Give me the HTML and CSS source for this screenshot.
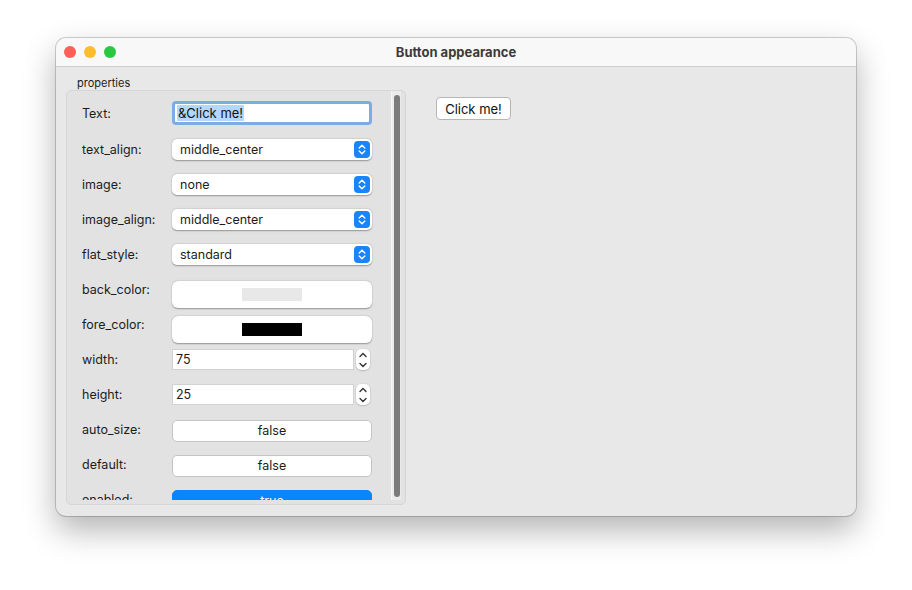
FILE: index.html
```html
<!DOCTYPE html>
<html lang="en">
<head>
    <meta charset="UTF-8">
    <title>Button appearance</title>
    <link rel="stylesheet" href="styles.css">
</head>
<body>
    <div class="window">
        <!-- title bar -->
        <div class="titlebar">
            <div class="lights">
                <span class="light red"></span>
                <span class="light yellow"></span>
                <span class="light green"></span>
            </div>
            <div class="title">Button appearance</div>
            <div></div>
        </div>

        <div class="content">
            <div class="props">
                <div class="group-label">properties</div>
                <div class="group">
                    <div class="scroller">
                        <div class="rows">
                            <div class="row first">
                                <label>Text:</label>
                                <div class="field"><span class="sel">&amp;Click me!</span></div>
                            </div>
                            <div class="row">
                                <label>text_align:</label>
                                <div class="select"><span>middle_center</span><span class="arrows"><svg width="8" height="11" viewBox="0 0 8 11"><path d="M1.2 4 L4 1.3 L6.8 4 M1.2 7 L4 9.7 L6.8 7" fill="none" stroke="#fff" stroke-width="1.4" stroke-linecap="round" stroke-linejoin="round"/></svg></span></div>
                            </div>
                            <div class="row">
                                <label>image:</label>
                                <div class="select"><span>none</span><span class="arrows"><svg width="8" height="11" viewBox="0 0 8 11"><path d="M1.2 4 L4 1.3 L6.8 4 M1.2 7 L4 9.7 L6.8 7" fill="none" stroke="#fff" stroke-width="1.4" stroke-linecap="round" stroke-linejoin="round"/></svg></span></div>
                            </div>
                            <div class="row">
                                <label>image_align:</label>
                                <div class="select"><span>middle_center</span><span class="arrows"><svg width="8" height="11" viewBox="0 0 8 11"><path d="M1.2 4 L4 1.3 L6.8 4 M1.2 7 L4 9.7 L6.8 7" fill="none" stroke="#fff" stroke-width="1.4" stroke-linecap="round" stroke-linejoin="round"/></svg></span></div>
                            </div>
                            <div class="row">
                                <label>flat_style:</label>
                                <div class="select"><span>standard</span><span class="arrows"><svg width="8" height="11" viewBox="0 0 8 11"><path d="M1.2 4 L4 1.3 L6.8 4 M1.2 7 L4 9.7 L6.8 7" fill="none" stroke="#fff" stroke-width="1.4" stroke-linecap="round" stroke-linejoin="round"/></svg></span></div>
                            </div>
                            <div class="row">
                                <label>back_color:</label>
                                <div class="color-btn"><span class="swatch light-swatch"></span></div>
                            </div>
                            <div class="row">
                                <label>fore_color:</label>
                                <div class="color-btn"><span class="swatch dark-swatch"></span></div>
                            </div>
                            <div class="row">
                                <label>width:</label>
                                <div class="spin">
                                    <div class="spin-field">75</div>
                                    <div class="stepper"><svg width="12" height="20" viewBox="0 0 12 20"><path d="M3 6.5 L6 3.5 L9 6.5 M3 13.5 L6 16.5 L9 13.5" fill="none" stroke="#333" stroke-width="1.4" stroke-linecap="round" stroke-linejoin="round"/></svg></div>
                                </div>
                            </div>
                            <div class="row">
                                <label>height:</label>
                                <div class="spin">
                                    <div class="spin-field">25</div>
                                    <div class="stepper"><svg width="12" height="20" viewBox="0 0 12 20"><path d="M3 6.5 L6 3.5 L9 6.5 M3 13.5 L6 16.5 L9 13.5" fill="none" stroke="#333" stroke-width="1.4" stroke-linecap="round" stroke-linejoin="round"/></svg></div>
                                </div>
                            </div>
                            <div class="row">
                                <label>auto_size:</label>
                                <div class="toggle">false</div>
                            </div>
                            <div class="row">
                                <label>default:</label>
                                <div class="toggle">false</div>
                            </div>
                            <div class="row">
                                <label>enabled:</label>
                                <div class="toggle on">true</div>
                            </div>
                        </div>
                        <div class="scrollbar"><div class="thumb"></div></div>
                    </div>
                </div>
            </div>

            <div class="preview">
                <button class="demo">Click me!</button>
            </div>
        </div>
    </div>
</body>
</html>
```

FILE: styles.css
```css
html, body {
    margin: 0;
    background: #ffffff;
}
body {
    height: 590px;
    padding: 38px 0 0 56px;
    box-sizing: border-box;
    font-family: Inter, "Noto Sans", sans-serif;
    font-size: 12.5px;
    color: #1c1c1c;
}
.window {
    width: 800px;
    height: 478px;
    background: #e8e8e8;
    border-radius: 10px;
    box-shadow: 0 0 0 1px rgba(0, 0, 0, 0.18), 0 14px 32px rgba(0, 0, 0, 0.3);
    overflow: hidden;
}
.titlebar {
    height: 28px;
    background: #f8f8f8;
    border-bottom: 1px solid #cfcfcf;
    display: grid;
    grid-template-columns: 1fr auto 1fr;
    align-items: center;
}
.lights {
    display: flex;
    gap: 8px;
    padding-left: 8px;
}
.light {
    width: 12px;
    height: 12px;
    border-radius: 50%;
}
.red { background: #ff5f57; }
.yellow { background: #febc2e; }
.green { background: #28c840; }
.title {
    font-weight: 700;
    font-size: 13px;
    color: #3b3b3b;
}
.content {
    display: flex;
    gap: 30px;
}
.props {
    margin-left: 10px;
    width: 340px;
}
.group-label {
    font-size: 11px;
    padding: 9px 0 0 11px;
    height: 14px;
}
.group {
    height: 413px;
    background: #e2e2e2;
    border: 1px solid #d6d6d6;
    border-radius: 5px;
    overflow: hidden;
}
.scroller {
    height: 409px;
    display: flex;
    overflow: hidden;
    padding-right: 3px;
}
.rows {
    flex: 1;
    padding: 3px 0 0 15px;
}
.row {
    height: 35px;
    display: flex;
    align-items: center;
}
.row.first {
    height: 38px;
}
.row label {
    width: 90px;
    flex-shrink: 0;
}
.field {
    width: 192px;
    height: 18px;
    border: 3px solid #7faae8;
    border-radius: 4px;
    background: #ffffff;
    padding-left: 2px;
    display: flex;
    align-items: center;
}
.sel {
    background: #b3d7ff;
    color: #111;
    font-size: 13px;
    line-height: 16px;
    padding: 0 1px;
}
.select {
    width: 200px;
    height: 21px;
    background: #ffffff;
    border-radius: 5px;
    box-shadow: 0 0.5px 1.5px rgba(0, 0, 0, 0.35);
    display: flex;
    align-items: center;
    justify-content: space-between;
    padding-left: 8px;
    box-sizing: border-box;
}
.arrows {
    width: 16px;
    height: 17px;
    margin-right: 2px;
    background: #1a84fb;
    border-radius: 4px;
    display: flex;
    align-items: center;
    justify-content: center;
}
.color-btn {
    width: 200px;
    height: 27px;
    margin-top: 10px;
    background: #ffffff;
    border-radius: 6px;
    box-shadow: 0 0.5px 1.5px rgba(0, 0, 0, 0.35);
    display: flex;
    align-items: center;
    justify-content: center;
}
.swatch {
    width: 60px;
    height: 13px;
}
.light-swatch { background: #e8e8e8; }
.dark-swatch { background: #000000; }
.spin {
    display: flex;
    align-items: center;
    gap: 2px;
}
.spin-field {
    width: 182px;
    height: 21px;
    box-sizing: border-box;
    background: #ffffff;
    border: 1px solid #d2d2d2;
    padding: 0 3px;
    line-height: 19px;
}
.stepper {
    width: 14px;
    height: 21px;
    background: #ffffff;
    border-radius: 5px;
    box-shadow: 0 0.5px 1.5px rgba(0, 0, 0, 0.3);
    display: flex;
    align-items: center;
    justify-content: center;
}
.toggle {
    width: 200px;
    height: 22px;
    box-sizing: border-box;
    background: #ffffff;
    border: 1px solid #c4c4c4;
    border-radius: 5px;
    text-align: center;
    line-height: 20px;
    margin-top: 2px;
}
.toggle.on {
    background: #0a84ff;
    border-color: #0a84ff;
    color: #ffffff;
}
.scrollbar {
    width: 10px;
    background: #ebebeb;
    border-left: 1px solid #f6f6f6;
    padding: 4px 0 3px 2px;
    box-sizing: border-box;
    margin-right: 1px;
}
.thumb {
    width: 6px;
    height: 100%;
    background: #7b7b7b;
    border-radius: 3px;
}
.preview {
    padding-top: 30px;
}
.demo {
    width: 75px;
    height: 23px;
    background: #ffffff;
    border: 1px solid #b5b5b5;
    border-radius: 4px;
    font-family: Inter, "Noto Sans", sans-serif;
    font-size: 13px;
    color: #111;
    padding: 0;
}
```
